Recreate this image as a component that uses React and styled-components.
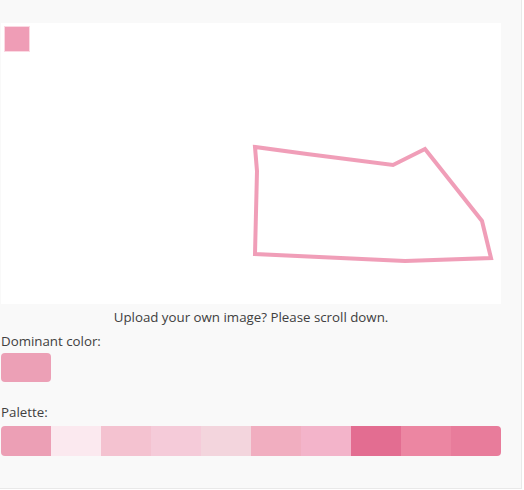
import React from 'react';
import styled, { createGlobalStyle } from 'styled-components';

const GlobalStyle = createGlobalStyle`
  html, body {
    margin: 0;
    padding: 0;
    background: #ffffff;
  }
`;

const Page = styled.div`
  width: 522px;
  height: 489px;
  background: #f9f9f9;
  border-right: 1px solid #e9e9e9;
  border-bottom: 1px solid #e9e9e9;
  padding: 23px 0 0 1px;
  box-sizing: border-box;
  font-family: "Open Sans", "Noto Sans", sans-serif;
  color: #404040;
  font-size: 13.3px;
`;

const Column = styled.div`
  width: 500px;
  display: flex;
  flex-direction: column;
`;

const Canvas = styled.svg`
  display: block;
  width: 500px;
  height: 281px;
  background: #ffffff;
`;

const Caption = styled.div`
  text-align: center;
  line-height: 18px;
  margin-top: 4px;
`;

const Label = styled.div`
  line-height: 18px;
  margin-top: ${({ $gap }) => $gap}px;
`;

const Swatch = styled.div`
  width: 50px;
  height: 29px;
  margin-top: 3px;
  border-radius: 4px;
  background: ${({ $color }) => $color};
`;

const PaletteBar = styled.div`
  display: flex;
  height: 30px;
  margin-top: 5px;
  border-radius: 4px;
  overflow: hidden;
`;

const Chip = styled.div`
  flex: 1;
  background: ${({ $color }) => $color};
`;

const palette = [
  '#ec9fb5', '#fbe9ef', '#f4c2d0', '#f5cbd9', '#f3d5dd',
  '#f1aec0', '#f3b4ca', '#e36d91', '#ec86a2', '#e87c9b',
];

const shape = [
  [254, 124], [256, 148], [254, 231], [404, 238], [490, 235],
  [481, 198], [424, 126], [392, 142], [306, 131],
];

const App = () => {
  const points = shape.map(([x, y]) => `${x},${y}`).join(' ');
  return (
    <>
      <GlobalStyle />
      <Page>
        <Column>
          <Canvas viewBox="0 0 500 281">
            <rect x="3.5" y="3.5" width="25" height="25" fill="#ef9db6" stroke="#fbd9e3" strokeWidth="1" />
            <polygon
              points={points}
              fill="none"
              stroke="#ee94b0"
              strokeOpacity="0.9"
              strokeWidth="4"
              strokeLinejoin="miter"
            />
          </Canvas>
          <Caption>Upload your own image? Please scroll down.</Caption>
          <Label $gap={6}>Dominant color:</Label>
          <Swatch $color="#eca0b6" />
          <Label $gap={21}>Palette:</Label>
          <PaletteBar>
            {palette.map((c) => (
              <Chip key={c} $color={c} />
            ))}
          </PaletteBar>
        </Column>
      </Page>
    </>
  );
};

export default App;
